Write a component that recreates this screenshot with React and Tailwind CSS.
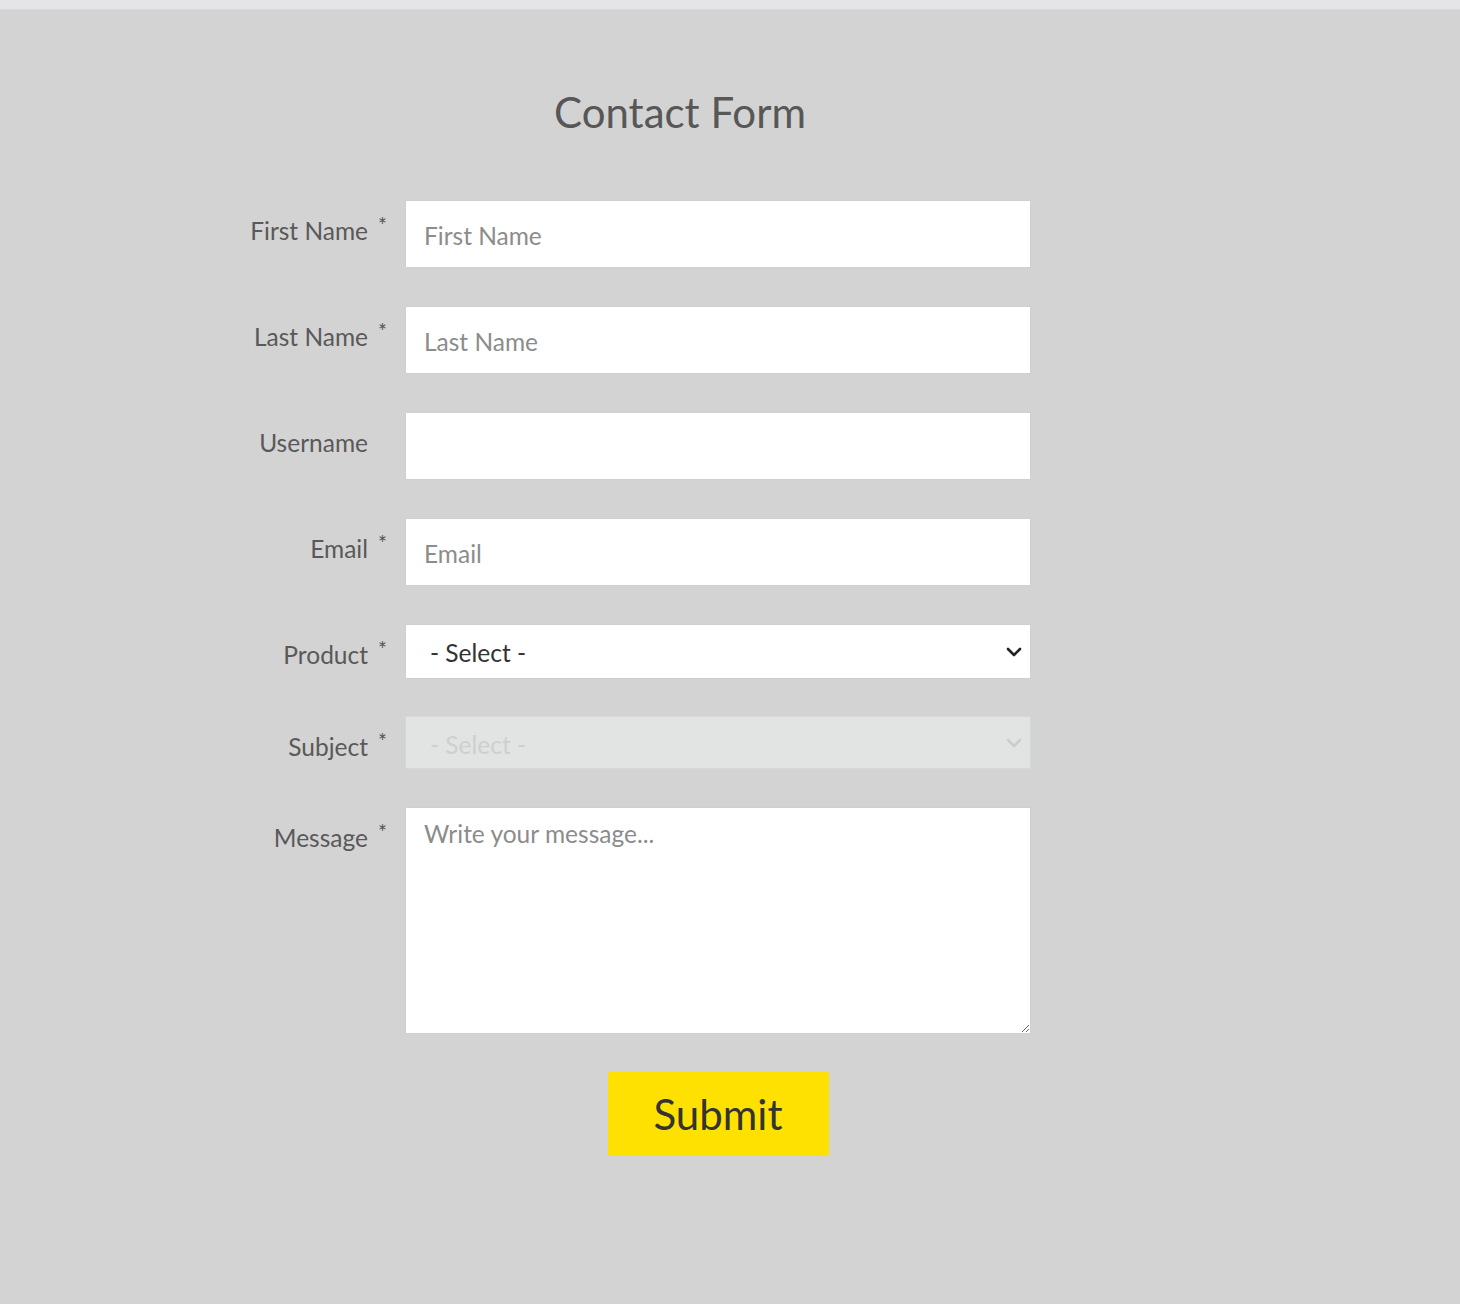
import { useState } from 'react';

const labelFont = { fontFamily: '"Lato", "Noto Sans", sans-serif' };

const Chevron = ({ disabled }) => (
  <svg
    className="pointer-events-none absolute right-[9px] top-1/2 -translate-y-1/2"
    width="16"
    height="12"
    viewBox="0 0 16 12"
    fill="none"
  >
    <path
      d="M2 3l6 6 6-6"
      stroke={disabled ? '#c9cdcd' : '#222'}
      strokeWidth="2.6"
      strokeLinecap="round"
      strokeLinejoin="round"
    />
  </svg>
);

const Row = ({ label, required, children, className = '' }) => (
  <div className={`flex ${className}`}>
    <div className="w-[205px] shrink-0 flex justify-end pr-[18px] pt-[13px]">
      <span className="text-[24.5px] leading-[35px] text-[#595959]">{label}</span>
      <span className={`ml-[10px] w-[9px] text-[21px] leading-[19px] mt-[2px] text-[#555] ${required ? '' : 'invisible'}`}>*</span>
    </div>
    <div className="w-[626px]">{children}</div>
  </div>
);

const inputCls =
  'block w-full h-[68px] bg-white border border-[#cfcfcf] px-[18px] pt-[2px] text-[24.5px] text-[#333] placeholder:text-[#8c8c8c] outline-none';

export default function App() {
  const [form, setForm] = useState({
    firstName: '',
    lastName: '',
    username: '',
    email: '',
    product: '',
    message: '',
  });

  const update = (key) => (e) => setForm({ ...form, [key]: e.target.value });

  return (
    <div className="min-h-[1304px] bg-[#d3d3d3]" style={labelFont}>
      <div className="h-[10px] bg-[#e5e5e7] border-b border-[#d9d9d9]" />
      <div className="ml-[200px] w-[960px]">
        <h1 className="text-center text-[42px] leading-[56px] text-[#575757] pt-[74px] pb-[60px]">
          Contact Form
        </h1>

        <div className="flex flex-col gap-[38px]">
          <Row label="First Name" required>
            <input className={inputCls} placeholder="First Name" value={form.firstName} onChange={update('firstName')} />
          </Row>
          <Row label="Last Name" required>
            <input className={inputCls} placeholder="Last Name" value={form.lastName} onChange={update('lastName')} />
          </Row>
          <Row label="Username">
            <input className={inputCls} value={form.username} onChange={update('username')} />
          </Row>
          <Row label="Email" required>
            <input className={inputCls} placeholder="Email" value={form.email} onChange={update('email')} />
          </Row>
          <Row label="Product" required>
            <div className="relative">
              <select
                className="block w-full h-[55px] appearance-none bg-white border border-[#cfcfcf] pl-[24px] pt-[4px] text-[24.5px] text-[#333] outline-none"
                value={form.product}
                onChange={update('product')}
              >
                <option value="">- Select -</option>
                <option value="a">Product A</option>
                <option value="b">Product B</option>
              </select>
              <Chevron />
            </div>
          </Row>
          <Row label="Subject" required className="-mt-[1px]">
            <div className="relative">
              <select
                disabled
                className="block w-full h-[53px] appearance-none bg-[#e2e3e3] border border-[#d6d8d8] pl-[24px] pt-[6px] text-[24.5px] text-[#ccd0d0] outline-none"
              >
                <option>- Select -</option>
              </select>
              <Chevron disabled />
            </div>
          </Row>
          <Row label="Message" required>
            <textarea
              className="block w-full h-[227px] bg-white border border-[#cfcfcf] px-[18px] py-[8px] text-[24.5px] text-[#333] placeholder:text-[#8c8c8c] outline-none"
              placeholder="Write your message..."
              value={form.message}
              onChange={update('message')}
            />
          </Row>
          <div className="flex pl-[205px]">
            <div className="w-[626px] flex justify-center">
              <button className="w-[221px] h-[84px] bg-[#ffe100] rounded-[2px] text-[42px] text-[#333]">
                Submit
              </button>
            </div>
          </div>
        </div>
      </div>
    </div>
  );
}
